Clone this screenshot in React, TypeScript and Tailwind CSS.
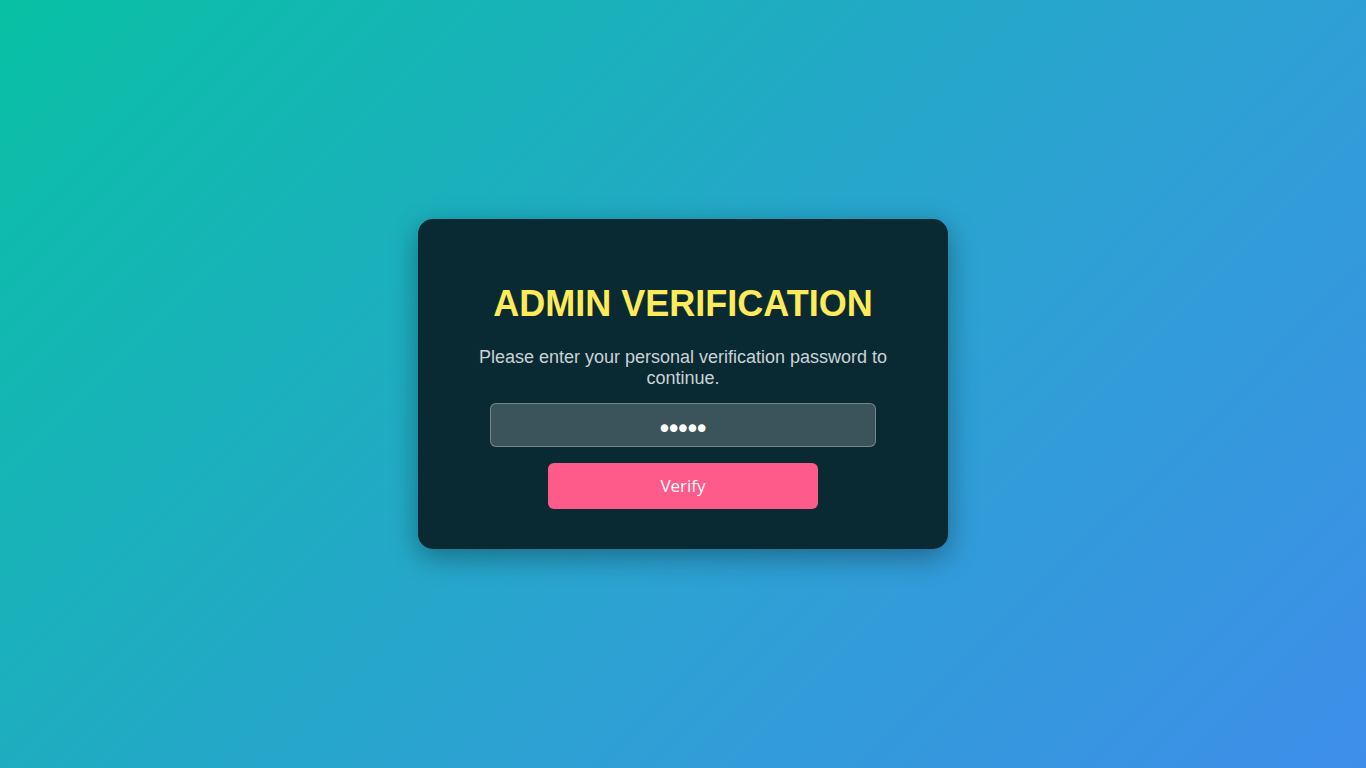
import { useState } from 'react'

export default function App() {
  const [password, setPassword] = useState('12345')

  return (
    <div className="flex min-h-screen w-full items-center justify-center bg-[linear-gradient(135deg,#08c1a4_0%,#2aa3d0_55%,#3e8ee9_100%)] font-['Liberation_Sans',Arial,sans-serif]">
      {/* Card */}
      <div className="flex w-[530px] flex-col items-center rounded-[15px] bg-[#0a2a33] px-10 pt-16 pb-10 shadow-[0_8px_28px_rgba(0,0,0,0.35)]">
        <h1 className="text-[36px] leading-[41px] font-bold text-[#ffeb5a]">
          ADMIN VERIFICATION
        </h1>
        <p className="mt-[23px] text-center text-[18px] leading-[21px] text-[#c9d3d6]">
          Please enter your personal verification password to continue.
        </p>
        <input
          type="password"
          value={password}
          onChange={(e) => setPassword(e.target.value)}
          className="mt-[14px] h-[44px] w-[386px] rounded-[6px] border border-[rgba(255,255,255,0.3)] bg-[rgba(255,255,255,0.2)] pt-[8px] pr-[6px] text-center font-['DejaVu_Sans',sans-serif] text-[26px] tracking-[-6px] text-white outline-none"
        />
        <button className="mt-[16px] h-[46px] w-[270px] rounded-[6px] bg-[#ff5b8a] font-['Open_Sans',sans-serif] text-[17px] text-white">
          Verify
        </button>
      </div>
    </div>
  )
}
